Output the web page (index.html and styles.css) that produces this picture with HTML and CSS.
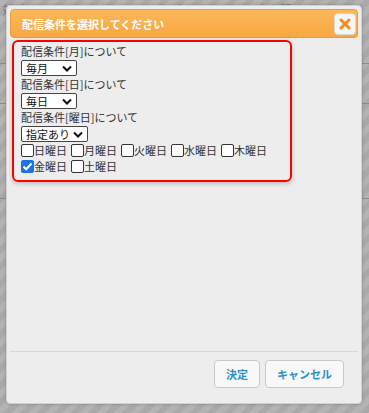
FILE: index.html
```html
<!DOCTYPE html>
<html lang="ja">
<head>
<meta charset="utf-8">
<link rel="stylesheet" href="styles.css">
</head>
<body>
<div class="backdrop" aria-hidden="true">
  <div class="ghost">対応していないパラメータがあります。ご確認ください</div>
</div>
<div class="dialog">
  <div class="titlebar">
    <span class="title">配信条件を選択してください</span>
    <button class="close" type="button" aria-label="close">
      <svg width="12" height="12" viewBox="0 0 12 12"><path d="M2 2 L10 10 M10 2 L2 10" stroke="#f28c1e" stroke-width="3" stroke-linecap="round"/></svg>
    </button>
  </div>
  <div class="content">
    <div class="box">
      <div class="label">配信条件[月]について</div>
      <div class="sel sel-s"><span>毎月</span><svg width="10" height="7" viewBox="0 0 10 7"><path d="M1 1.5 L5 5.5 L9 1.5" fill="none" stroke="#111" stroke-width="2"/></svg></div>
      <div class="label">配信条件[日]について</div>
      <div class="sel sel-s"><span>毎日</span><svg width="10" height="7" viewBox="0 0 10 7"><path d="M1 1.5 L5 5.5 L9 1.5" fill="none" stroke="#111" stroke-width="2"/></svg></div>
      <div class="label">配信条件[曜日]について</div>
      <div class="sel sel-l"><span>指定あり</span><svg width="10" height="7" viewBox="0 0 10 7"><path d="M1 1.5 L5 5.5 L9 1.5" fill="none" stroke="#111" stroke-width="2"/></svg></div>
      <div class="days">
        <label class="day"><span class="cb"></span>日曜日</label>
        <label class="day"><span class="cb"></span>月曜日</label>
        <label class="day"><span class="cb"></span>火曜日</label>
        <label class="day"><span class="cb"></span>水曜日</label>
        <label class="day"><span class="cb"></span>木曜日</label>
      </div>
      <div class="days">
        <label class="day"><span class="cb checked"><svg width="11" height="9" viewBox="0 0 11 9"><path d="M1.5 4.5 L4.2 7.2 L9.5 1.5" fill="none" stroke="#fff" stroke-width="2"/></svg></span>金曜日</label>
        <label class="day"><span class="cb"></span>土曜日</label>
      </div>
    </div>
  </div>
  <div class="footer">
    <button class="btn" type="button">決定</button>
    <button class="btn btn-cancel" type="button">キャンセル</button>
  </div>
</div>
</body>
</html>
```
FILE: styles.css
```css
html, body {
  margin: 0;
  padding: 0;
  width: 369px;
  height: 413px;
  overflow: hidden;
}
body {
  position: relative;
  font-family: "Noto Sans CJK JP", "Noto Sans", sans-serif;
  background-color: #b0b0b0;
  background-image:
    linear-gradient(#8a8a8a, #8a8a8a),
    linear-gradient(#8a8a8a, #8a8a8a),
    linear-gradient(#8a8a8a, #8a8a8a),
    repeating-linear-gradient(135deg, #b3b3b3 0 6px, #a9a9a9 6px 12px);
  background-size: 100% 1px, 100% 1px, 100% 1px, auto;
  background-position: 0 63px, 0 103px, 0 198px, 0 0;
  background-repeat: no-repeat, no-repeat, no-repeat, repeat;
}
.backdrop {
  position: absolute;
  inset: 0;
  overflow: hidden;
}
.ghost {
  padding: 1px 0 0 2px;
  font-size: 12px;
  color: #7c7c7c;
  white-space: nowrap;
  letter-spacing: 2px;
  overflow: hidden;
  width: 360px;
}
.dialog {
  position: absolute;
  left: 6px;
  top: 5px;
  width: 356px;
  height: 399px;
  box-sizing: border-box;
  background: #ededed;
  border: 1px solid #d2d2d2;
  border-radius: 4px;
  padding: 3px;
  display: flex;
  flex-direction: column;
  box-shadow: 0 0 3px rgba(0,0,0,0.25);
}
.titlebar {
  height: 29px;
  box-sizing: border-box;
  background: linear-gradient(#fbb75a, #f7a841);
  border: 1px solid #eb9b33;
  border-radius: 4px;
  display: flex;
  align-items: center;
  justify-content: space-between;
  padding: 0 1px 0 11px;
}
.title {
  color: #fff;
  font-weight: bold;
  font-size: 11px;
  white-space: nowrap;
}
.close {
  width: 22px;
  height: 22px;
  border: 1px solid #d8d8d8;
  border-radius: 4px;
  background: #f6f6f6;
  display: flex;
  align-items: center;
  justify-content: center;
  padding: 0;
}
.content {
  flex: 1;
  padding: 2px 0 0 2px;
}
.box {
  width: 280px;
  box-sizing: border-box;
  border: 2px solid #f00;
  border-radius: 6px;
  padding: 1px 8px 6px 7px;
  box-shadow: 0 2px 4px rgba(0,0,0,0.2);
  font-size: 11px;
  color: #333;
  white-space: nowrap;
}
.label {
  height: 17px;
  line-height: 17px;
}
.sel {
  height: 16px;
  box-sizing: border-box;
  border: 1px solid #444;
  border-radius: 2px;
  background: #fff;
  display: flex;
  align-items: center;
  justify-content: space-between;
  padding: 0 4px 0 4px;
  color: #111;
  line-height: 14px;
  font-size: 11px;
}
.sel-s { width: 56px; }
.sel-l { width: 67px; }
.days {
  display: flex;
  height: 16px;
  align-items: center;
}
.day {
  display: flex;
  align-items: center;
  margin-right: 4px;
  color: #333;
  white-space: nowrap;
  flex-shrink: 0;
}
.cb {
  width: 13px;
  height: 13px;
  box-sizing: border-box;
  border: 1px solid #333;
  border-radius: 2px;
  background: #fff;
  display: flex;
  align-items: center;
  justify-content: center;
  flex-shrink: 0;
}
.cb.checked {
  background: #1a73e8;
  border-color: #1a73e8;
}
.footer {
  border-top: 1px solid #d6d6d6;
  height: 44px;
  display: flex;
  justify-content: flex-end;
  align-items: center;
  gap: 5px;
  padding: 0 14px 4px 0;
}
.btn {
  height: 28px;
  box-sizing: border-box;
  border: 1px solid #c8c8c8;
  border-radius: 4px;
  background: #f8f8f8;
  color: #2a90c8;
  font-family: "Noto Sans CJK JP", "Noto Sans", sans-serif;
  font-weight: bold;
  font-size: 11px;
  width: 46px;
  padding: 0;
}
.btn-cancel { width: 79px; }
```
